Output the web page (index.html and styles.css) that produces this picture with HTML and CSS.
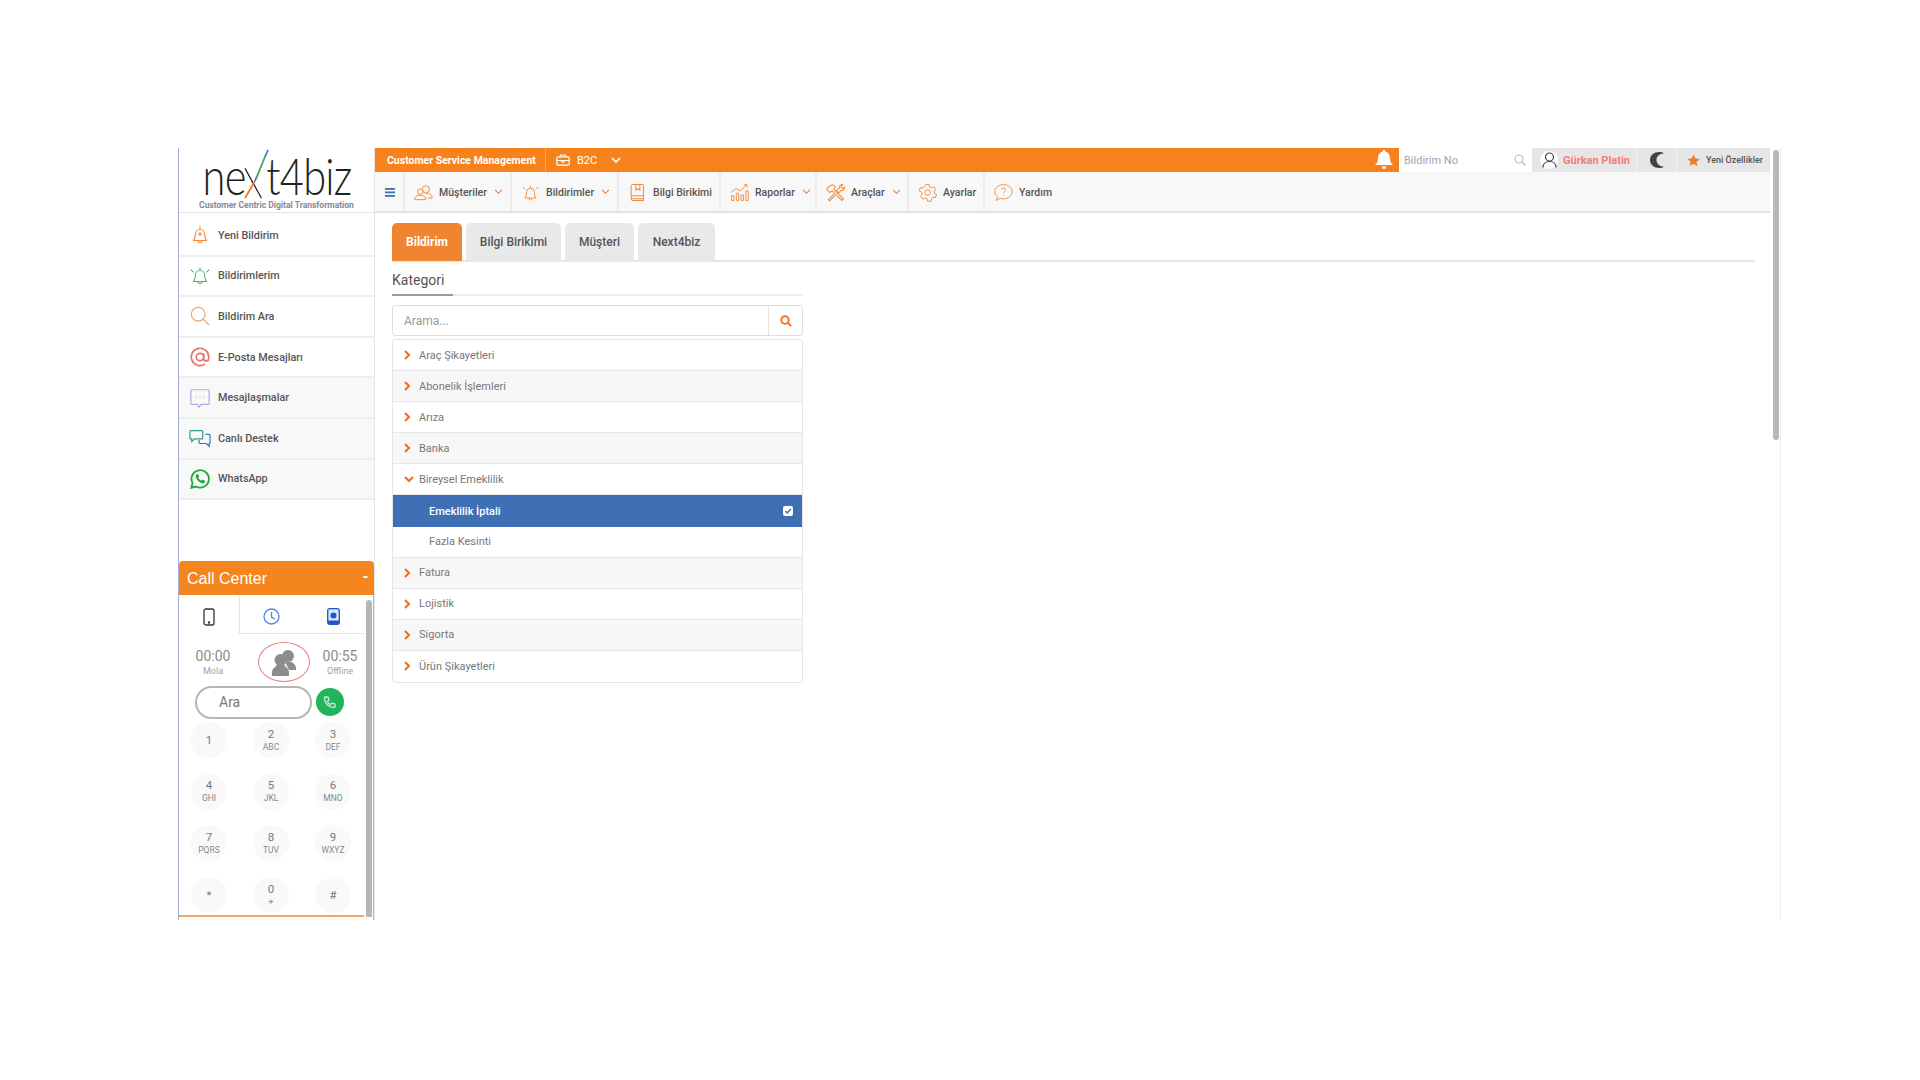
FILE: index.html
```html
<!DOCTYPE html>
<html lang="tr">
<head>
<meta charset="utf-8">
<title>next4biz</title>
<link rel="stylesheet" href="styles.css">
</head>
<body>
<div class="app">
  <aside class="side">
    <div class="logo">
      <div class="logo-mark"><span>ne</span><svg class="logo-x" viewBox="0 0 34 56" width="34" height="52"><path d="M2 22 L24 54" stroke="#1b1b1b" stroke-width="1.600" fill="none"/><path d="M2 54 L15 36" stroke="#f47b20" stroke-width="2.400" fill="none"/><path d="M15 36 L33 2" stroke="#2f6fd0" stroke-width="2" fill="none"/><path d="M17 34 L30 6" stroke="#5db04a" stroke-width="1.600" fill="none"/></svg><span>t4biz</span></div>
      <div class="logo-sub">Customer Centric Digital Transformation</div>
    </div>
    <nav class="side-nav">
      <a class="side-row"><svg class="side-ic" viewBox="0 0 24 24" fill="none" stroke="#f58a3c" stroke-width="1.300"><path d="M5 18c1.500-2 2-3.500 2-7a5 5 0 0 1 10 0c0 3.500.5 5 2 7zM12 2.500V6M9.500 18.500a2.600 2.600 0 0 0 5 0M12 9v4M10 11h4"/></svg><span>Yeni Bildirim</span></a>
      <a class="side-row"><svg class="side-ic" viewBox="0 0 24 24" fill="none" stroke="#58b368" stroke-width="1.200"><path d="M5 18c1.500-2 2-3.500 2-7a5 5 0 0 1 10 0c0 3.500.5 5 2 7zM9.500 18.500a2.600 2.600 0 0 0 5 0M12 3v3M2 5l3 3M22 5l-3 3"/></svg><span>Bildirimlerim</span></a>
      <a class="side-row"><svg class="side-ic" viewBox="0 0 24 24" fill="none" stroke="#f7a36a" stroke-width="1.300"><circle cx="10" cy="10" r="7.500"/><path d="M15.500 15.500L22 22"/></svg><span>Bildirim Ara</span></a>
      <a class="side-row"><svg class="side-ic" viewBox="0 0 24 24" fill="none" stroke="#e8736f" stroke-width="1.800"><circle cx="12" cy="12" r="4"/><path d="M16 8v5.500a2.700 2.700 0 0 0 5.500 0V12a9.500 9.500 0 1 0-4 7.700"/></svg><span>E-Posta Mesajları</span></a>
      <a class="side-row alt"><svg class="side-ic" viewBox="0 0 24 24" fill="none" stroke="#a9aee8" stroke-width="1.300"><path d="M3 3h18a1 1 0 0 1 1 1v14a1 1 0 0 1-1 1h-8l-2 3-2-3H3a1 1 0 0 1-1-1V4a1 1 0 0 1 1-1z"/><path d="M7.500 11h1M11.500 11h1M15.500 11h1"/></svg><span>Mesajlaşmalar</span></a>
      <a class="side-row alt"><svg class="side-ic" viewBox="0 0 24 24" fill="none" stroke-width="1.300"><path stroke="#2f9d8f" d="M2 4h12a1 1 0 0 1 1 1v7a1 1 0 0 1-1 1H6l-3 3v-3H2a1 1 0 0 1-1-1V5a1 1 0 0 1 1-1z"/><path stroke="#2b7bc4" d="M18 8h4a1 1 0 0 1 1 1v8a1 1 0 0 1-1 1v3l-3-3h-7a1 1 0 0 1-1-1v-3"/></svg><span>Canlı Destek</span></a>
      <a class="side-row alt"><svg class="side-ic" viewBox="0 0 24 24"><path fill="none" stroke="#1fa83c" stroke-width="2" d="M2.500 21.500l1.400-5a9.500 9.500 0 1 1 3.700 3.700z"/><path fill="#1fa83c" d="M8.500 6.800c.6-.5 1.300-.4 1.600.2l.8 1.800c.2.400 0 .8-.3 1.100l-.6.7c.8 1.500 2 2.600 3.500 3.400l.8-.9c.3-.3.7-.4 1-.2l1.800.9c.5.300.6.900.3 1.500-.6 1.200-2 1.700-3.300 1.300-3.300-1-5.800-3.500-6.700-6.700-.3-1.200.1-2.300 1.100-3.100z"/></svg><span>WhatsApp</span></a>
    </nav>
    <section class="cc">
      <header class="cc-head"><span>Call Center</span><b>-</b></header>
      <div class="cc-body">
        <div class="cc-main">
          <div class="cc-tabs">
            <div class="cc-tab active"><svg width="12" height="18" viewBox="0 0 12 18" fill="none" stroke="#333" stroke-width="1.300"><rect x="1" y="1" width="10" height="16" rx="2"/><circle cx="6" cy="14.500" r=".6" fill="#333"/></svg></div>
            <div class="cc-tab"><svg width="17" height="17" viewBox="0 0 17 17" fill="none" stroke="#4d86e8" stroke-width="1.300"><circle cx="8.500" cy="8.500" r="7.500"/><path d="M8.500 4v5l3.500 2"/></svg></div>
            <div class="cc-tab"><svg width="13" height="17" viewBox="0 0 13 17"><rect x=".7" y=".7" width="11.600" height="15.600" rx="2" fill="#d8e4fb" stroke="#1f56c8" stroke-width="1.300"/><circle cx="6.500" cy="7.500" r="3" fill="#1f56c8"/><path d="M1 12.500h11v2.500a1 1 0 0 1-1 1H2a1 1 0 0 1-1-1z" fill="#1f56c8"/></svg></div>
          </div>
          <div class="cc-status">
            <div class="timer"><strong>00:00</strong><small>Mola</small></div>
            <div class="agent"><svg width="24" height="27" viewBox="0 0 24 27" fill="#8c8c8c"><circle cx="16" cy="7" r="6"/><path d="M13 13h7l3 3c1 1 1 3 1 5h-7z"/><circle cx="8.500" cy="11" r="6"/><path d="M5 16h7l4 4c1 1 1 4 1 7H0c0-3 0-6 1-7z"/></svg></div>
            <div class="timer last"><strong>00:55</strong><small>Offline</small></div>
          </div>
          <div class="cc-dial">
            <div class="dial-input">Ara</div>
            <div class="dial-btn"><svg width="14" height="14" viewBox="0 0 24 24" fill="none" stroke="#cfe9d6" stroke-width="2.400"><path d="M5 3l4 1 1 5-2.500 2c1 2.500 3 4.500 5.500 5.500L15 14l5 1 1 4c0 1.500-1.500 2.500-3 2.500C10 21 3 14 2.500 6 2.500 4.500 3.500 3 5 3z"/></svg></div>
          </div>
          <div class="keypad">
            <div class="key solo"><b>1</b></div>
            <div class="key"><b>2</b><i>ABC</i></div>
            <div class="key"><b>3</b><i>DEF</i></div>
            <div class="key"><b>4</b><i>GHI</i></div>
            <div class="key"><b>5</b><i>JKL</i></div>
            <div class="key"><b>6</b><i>MNO</i></div>
            <div class="key"><b>7</b><i>PQRS</i></div>
            <div class="key"><b>8</b><i>TUV</i></div>
            <div class="key"><b>9</b><i>WXYZ</i></div>
            <div class="key solo"><b>*</b></div>
            <div class="key"><b>0</b><i>+</i></div>
            <div class="key solo"><b>#</b></div>
          </div>
        </div>
        <div class="cc-track"></div>
      </div>
    </section>
  </aside>
  <div class="main">
    <div class="topbar">
      <div class="tb-title">Customer Service Management</div>
      <div class="tb-b2c"><svg width="14" height="12" viewBox="0 0 14 12" fill="none" stroke="#fff" stroke-width="1.200"><rect x=".8" y="2.800" width="12.400" height="8.400" rx="1.500"/><path d="M4.500 2.800V1h5v1.800M.8 6.500h12.400M6 6.500v1.500h2V6.500"/></svg><span>B2C</span><svg class="chev-w" width="10" height="7" viewBox="0 0 10 7" fill="none" stroke="#fff" stroke-width="1.700"><path d="M1 1l4 4 4-4"/></svg></div>
      <div class="tb-bell"><svg width="18" height="20" viewBox="0 0 18 20" fill="#fff"><path d="M9 0c1 0 1.400.7 1.400 1.500C13.500 2.300 15 5 15 8c0 3.500 1 5.500 3 7H0c2-1.500 3-3.500 3-7 0-3 1.500-5.700 4.600-6.500C7.600.7 8 0 9 0z"/><path d="M6.500 16.500h5a2.500 2.500 0 0 1-5 0z"/></svg></div>
      <div class="tb-search"><span>Bildirim No</span><svg width="12" height="12" viewBox="0 0 12 12" fill="none" stroke="#b5b5b5" stroke-width="1.100"><circle cx="5" cy="5" r="4"/><path d="M8 8l3.500 3.500"/></svg></div>
      <div class="tb-user"><span class="avatar"><svg width="15" height="16" viewBox="0 0 15 16" fill="none" stroke="#444" stroke-width="1.200"><circle cx="7.500" cy="5" r="4"/><path d="M1 15.500c0-3.500 2.500-6 6.500-6s6.500 2.500 6.500 6"/></svg></span><span class="uname">Gürkan Platin</span></div>
      <div class="tb-moon"><svg width="14" height="16" viewBox="0 0 14 16" fill="#444"><path d="M9.500 0C4 0 0 3.500 0 8s4 8 9.500 8c1.800 0 3.200-.4 4.500-1.200C10 14.500 6.500 12 6.500 8S10 1.500 14 1.200C12.700.4 11.300 0 9.500 0z"/></svg></div>
      <div class="tb-new"><svg width="13" height="13" viewBox="0 0 24 24" fill="#f47b20"><path d="M12 1l3.400 7.300 7.900 1-5.800 5.500 1.500 7.900L12 18l-7 3.700 1.500-7.900L.7 9.300l7.900-1z"/></svg><span>Yeni Özellikler</span></div>
    </div>
    <nav class="menu">
      <div class="m-item m-burger"><svg width="10" height="9" viewBox="0 0 10 9" fill="#3f6fb5"><rect width="10" height="1.800"/><rect y="3.500" width="10" height="1.800"/><rect y="7" width="10" height="1.800"/></svg></div>
      <div class="m-item w1"><svg class="m-ic" viewBox="0 0 24 20" fill="none" stroke="#f58a3c" stroke-width="1.200"><circle cx="15" cy="6" r="4.500"/><circle cx="8" cy="9" r="3.500"/><path d="M1 19c0-3.500 2.500-5.500 7-5.500s7 2 7 5.500zM15 11c4.500 0 8 2 8 6h-6"/></svg><span>Müşteriler</span><svg class="chev" viewBox="0 0 10 7" fill="none" stroke="#f47b20" stroke-width="1.300"><path d="M1 1l4 4 4-4"/></svg></div>
      <div class="m-item w2"><svg class="m-ic" viewBox="0 0 24 24" fill="none" stroke="#f58a3c" stroke-width="1.200"><path d="M5 19c1.500-2 2-4 2-7.500a5 5 0 0 1 10 0c0 3.500.5 5.500 2 7.500zM9.500 19.500a2.600 2.600 0 0 0 5 0M12 3.500V6.500M2 5l3 3M22 5l-3 3"/></svg><span>Bildirimler</span><svg class="chev" viewBox="0 0 10 7" fill="none" stroke="#f47b20" stroke-width="1.300"><path d="M1 1l4 4 4-4"/></svg></div>
      <div class="m-item w3"><svg class="m-ic" viewBox="0 0 24 24" fill="none" stroke="#f58a3c" stroke-width="1.300"><path d="M6 2h12a1.500 1.500 0 0 1 1.500 1.500V20H6a2 2 0 0 1-2-2V4a2 2 0 0 1 2-2zM4 18a2 2 0 0 1 2-2h13.500M19.500 20v2H6a2 2 0 0 1-2-2M10 2v7l2.500-2L15 9V2"/></svg><span>Bilgi Birikimi</span></div>
      <div class="m-item w4"><svg class="m-ic" viewBox="0 0 24 24" fill="none" stroke="#f58a3c" stroke-width="1.200"><path d="M2 22v-6h3v6zM8 22v-9h3v9zM14 22v-7h3v7zM20 22V10h3v12zM1 12l7-5 5 3 8-8M18 2h3.500v3.500"/></svg><span>Raporlar</span><svg class="chev" viewBox="0 0 10 7" fill="none" stroke="#f47b20" stroke-width="1.300"><path d="M1 1l4 4 4-4"/></svg></div>
      <div class="m-item w5"><svg class="m-ic" viewBox="0 0 24 24" fill="none" stroke="#f58a3c" stroke-width="1.300"><path d="M3 5l5-3 4 3-2 3 12 12-2 2L8 10 5 12 1 8zM13 10l4-4c-.5-2 1-4 4-4l-2 3 2 2 2.500-2c0 3-2 5-4.500 4.500l-3 3zM10 14l-7 7 1.500 1.500 7-7"/></svg><span>Araçlar</span><svg class="chev" viewBox="0 0 10 7" fill="none" stroke="#f47b20" stroke-width="1.300"><path d="M1 1l4 4 4-4"/></svg></div>
      <div class="m-item w6"><svg class="m-ic" viewBox="0 0 24 24" fill="none" stroke="#f58a3c" stroke-width="1.200"><circle cx="12" cy="12" r="3.500"/><path d="M10 2h4l.7 3 2.700 1.200L20 4.500l2.500 3.500-2 2.300.3 2.700 2.700 1.500-1.500 4-3-.5-2 2-.2 3h-4.600l-.7-3-2.700-1.200-2.600 1.700L3.200 17l1.800-2.400-.3-2.800L1.500 10 3 6l3 .5 2-2z"/></svg><span>Ayarlar</span></div>
      <div class="m-item w7"><svg class="m-ic" viewBox="0 0 24 24" fill="none" stroke="#f58a3c" stroke-width="1.200"><path d="M12 2c6 0 11 4 11 9s-5 9-11 9c-1.500 0-3-.3-4-.7L3 22l1.500-4.500C2.500 16 1 13.700 1 11c0-5 5-9 11-9z"/><path d="M9.500 8.500c.3-1.500 1.300-2.200 2.600-2.200 1.500 0 2.500 1 2.500 2.200 0 2-2.600 2-2.600 4M12 14.500v1"/></svg><span>Yardım</span></div>
    </nav>
    <main class="content">
      <div class="tabs">
        <div class="tab on">Bildirim</div>
        <div class="tab t2">Bilgi Birikimi</div>
        <div class="tab t3">Müşteri</div>
        <div class="tab t4">Next4biz</div>
      </div>
      <div class="cat">
        <h2 class="cat-title"><span>Kategori</span></h2>
        <div class="search"><div class="search-in">Arama...</div><div class="search-btn"><svg width="12" height="12" viewBox="0 0 12 12" fill="none" stroke="#ef6c1a" stroke-width="1.800"><circle cx="5" cy="5" r="3.800"/><path d="M8 8l3.200 3.200"/></svg></div></div>
        <ul class="tree">
          <li class="node"><svg class="arr" viewBox="0 0 7 10" fill="none" stroke="#f26a1b" stroke-width="2"><path d="M1 1l4 4-4 4"/></svg>Araç Şikayetleri</li>
          <li class="node grey"><svg class="arr" viewBox="0 0 7 10" fill="none" stroke="#f26a1b" stroke-width="2"><path d="M1 1l4 4-4 4"/></svg>Abonelik İşlemleri</li>
          <li class="node"><svg class="arr" viewBox="0 0 7 10" fill="none" stroke="#f26a1b" stroke-width="2"><path d="M1 1l4 4-4 4"/></svg>Arıza</li>
          <li class="node grey"><svg class="arr" viewBox="0 0 7 10" fill="none" stroke="#f26a1b" stroke-width="2"><path d="M1 1l4 4-4 4"/></svg>Banka</li>
          <li class="node"><svg class="arr-d" viewBox="0 0 10 7" fill="none" stroke="#f26a1b" stroke-width="2"><path d="M1 1l4 4 4-4"/></svg>Bireysel Emeklilik</li>
          <li class="node child sel"><span>Emeklilik İptali</span><svg class="check" width="10" height="10" viewBox="0 0 10 10"><rect width="10" height="10" rx="2" fill="#fff"/><path d="M2.300 5l2 2 3.500-4" fill="none" stroke="#3f6fb5" stroke-width="1.500"/></svg></li>
          <li class="node child">Fazla Kesinti</li>
          <li class="node grey"><svg class="arr" viewBox="0 0 7 10" fill="none" stroke="#f26a1b" stroke-width="2"><path d="M1 1l4 4-4 4"/></svg>Fatura</li>
          <li class="node"><svg class="arr" viewBox="0 0 7 10" fill="none" stroke="#f26a1b" stroke-width="2"><path d="M1 1l4 4-4 4"/></svg>Lojistik</li>
          <li class="node grey"><svg class="arr" viewBox="0 0 7 10" fill="none" stroke="#f26a1b" stroke-width="2"><path d="M1 1l4 4-4 4"/></svg>Sigorta</li>
          <li class="node"><svg class="arr" viewBox="0 0 7 10" fill="none" stroke="#f26a1b" stroke-width="2"><path d="M1 1l4 4-4 4"/></svg>Ürün Şikayetleri</li>
        </ul>
      </div>
    </main>
  </div>
  <div class="page-track"><div class="page-thumb"></div></div>
</div>
</body>
</html>
```
FILE: styles.css
```css
* { box-sizing: border-box; }
html, body { margin: 0; height: 100%; background: #fff; overflow: hidden; }
body { font-family: Roboto, "Noto Sans", sans-serif; color: #555; padding: 148px 0 0 178px; }
ul { list-style: none; margin: 0; padding: 0; }
.app { display: flex; width: 1602px; height: 772px; }

/* sidebar */
.side { width: 197px; flex: none; display: flex; flex-direction: column; border-left: 1px solid #a5acd8; border-right: 1px solid #e6e6ea; }
.logo { height: 65px; display: flex; flex-direction: column; align-items: center; border-bottom: 1px solid #e3e3e3; padding-top: 2px; flex: none; }
.logo-mark { display: flex; align-items: flex-end; height: 50px; font-family: Lato, sans-serif; font-size: 52px; line-height: 50px; font-weight: 300; color: #222; letter-spacing: -1px; transform: scaleX(.8); white-space: nowrap; }
.logo-x { margin: 0 -4px 0 -4px; flex: none; }
.logo-sub { font-size: 8.500px; font-weight: 700; color: #858a92; line-height: 11px; white-space: nowrap; }
.side-nav { display: flex; flex-direction: column; padding-top: 3px; flex: none; }
.side-row { height: 40.600px; display: flex; align-items: center; gap: 7px; padding-left: 10px; border-bottom: 2px solid #eeeeef; font-size: 10.800px; font-weight: 500; color: #555; flex: none; }
.side-row.alt { background: #f8f8f8; }
.side-ic { width: 22px; height: 22px; flex: none; }

/* call center */
.cc { height: 359px; margin-top: auto; flex: none; display: flex; flex-direction: column; }
.cc-head { height: 34px; background: #f5851f; color: #fff; border-radius: 4px 4px 0 0; display: flex; align-items: center; justify-content: space-between; padding: 1px 6px 0 8px; font: 400 16px "Liberation Sans", sans-serif; }
.cc-head b { font-weight: 700; margin-top: -5px; }
.cc-body { flex: 1; display: flex; border-right: 1px solid #f6a465; min-height: 0; }
.cc-main { width: 185px; flex: none; border-bottom: 2px solid #f6a465; height: 322px; }
.cc-track { width: 6px; height: 317px; margin: 5px 0 0 2px; background: #b5b5b5; border-radius: 3px 3px 0 0; }
.cc-tabs { display: flex; height: 39px; }
.cc-tab { flex: 1; display: flex; align-items: center; justify-content: center; border-bottom: 1px solid #e3e3ea; padding-top: 5px; }
.cc-tab.active { flex: 0 0 61px; border-bottom: 0; border-right: 1px solid #e3e3ea; border-radius: 4px 4px 0 0; }
.cc-status { display: flex; align-items: center; height: 50px; padding-left: 14px; margin-top: 3px; }
.timer { display: flex; flex-direction: column; align-items: center; width: 40px; flex: none; }
.timer strong { font-size: 14px; line-height: 18px; font-weight: 400; color: #8b8b8b; }
.timer small { font-size: 9px; line-height: 13px; color: #a2a2a2; }
.agent { width: 52px; height: 40px; border: 1px solid #e98080; border-radius: 50%; display: flex; align-items: center; justify-content: center; margin-left: 25px; flex: none; }
.timer.last { margin-left: 10px; }
.cc-dial { display: flex; align-items: center; gap: 4px; padding-left: 16px; height: 34px; margin-top: -2px; }
.dial-input { width: 117px; height: 33px; border: 2px solid #b5b5b5; border-radius: 17px; padding-left: 22px; font-size: 14px; line-height: 29px; color: #777; }
.dial-btn { width: 28px; height: 28px; border-radius: 50%; background: #22b45a; display: flex; align-items: center; justify-content: center; flex: none; }
.keypad { display: grid; grid-template-columns: repeat(3, 36px); column-gap: 26px; row-gap: 15.700px; padding: 3px 0 0 12px; }
.key { width: 36px; height: 36px; border-radius: 50%; background: #f9f9fa; display: flex; flex-direction: column; align-items: center; justify-content: center; color: #777; }
.key b { font-size: 11.500px; line-height: 14px; font-weight: 400; }
.key i { font-size: 8.500px; line-height: 13px; font-style: normal; color: #888; }

/* main column */
.main { width: 1395px; flex: none; display: flex; flex-direction: column; }
.topbar { display: flex; height: 24px; background: #f7821b; color: #fff; align-items: stretch; flex: none; }
.tb-title { width: 171px; padding-left: 12px; font-size: 10.500px; font-weight: 700; line-height: 25px; border-right: 1px solid #fba765; white-space: nowrap; }
.tb-b2c { flex: 1; display: flex; align-items: center; gap: 7px; padding-left: 10px; font-size: 11px; }
.chev-w { margin-left: 7px; }
.tb-bell { width: 30px; display: flex; align-items: center; justify-content: center; }
.tb-search { width: 133px; background: #fff; color: #a5a5a5; font-size: 11px; display: flex; align-items: center; justify-content: space-between; padding: 0 6px 0 5px; }
.tb-user { width: 105px; background: #e6e6e6; display: flex; align-items: center; gap: 5px; padding-left: 8px; border-right: 1px solid #f3f3f3; }
.avatar { width: 18px; height: 18px; border-radius: 50%; background: #fff; display: flex; align-items: center; justify-content: center; flex: none; }
.uname { color: #ee7f74; font-size: 11px; font-weight: 700; white-space: nowrap; }
.tb-moon { width: 40px; background: #e6e6e6; display: flex; align-items: center; justify-content: center; border-right: 1px solid #f3f3f3; }
.tb-new { width: 93px; background: #e6e6e6; color: #555; display: flex; align-items: center; gap: 6px; padding-left: 10px; font-size: 9px; font-weight: 500; white-space: nowrap; }

.menu { display: flex; height: 41px; background: #f8f8f8; border-bottom: 2px solid #e2e3ea; flex: none; font-size: 10.500px; font-weight: 500; color: #555; }
.m-item { display: flex; align-items: center; gap: 6px; padding: 1px 0 0 9px; border-right: 2px solid #ececee; white-space: nowrap; }
.m-burger { width: 30px; padding-left: 10px; }
.m-ic { width: 19px; height: 19px; flex: none; }
.chev { width: 9px; height: 6px; margin-left: 1px; }
.w1 { width: 107px; } .w2 { width: 107px; } .w3 { width: 102px; } .w4 { width: 96px; } .w5 { width: 92px; } .w6 { width: 76px; }
.w7 { width: 76px; border-right: 0; }

.content { flex: 1; padding: 10px 0 0 17px; background: #fff; }
.tabs { display: flex; gap: 4px; height: 39px; border-bottom: 2px solid #e6e6e6; width: 1363px; }
.tab { height: 38px; width: 70px; border-radius: 5px 5px 0 0; background: #e9e9e9; color: #555; font-size: 12px; font-weight: 500; display: flex; align-items: center; justify-content: center; }
.tab.on { background: #ef8530; color: #fff; font-weight: 700; }
.tab.t2 { width: 95px; } .tab.t3 { width: 69px; } .tab.t4 { width: 77px; }
.cat { width: 411px; }
.cat-title { margin: 6px 0 0; height: 28px; border-bottom: 2px solid #ececec; font-size: 14px; font-weight: 400; color: #555; line-height: 24px; }
.cat-title span { display: inline-block; height: 28px; width: 61px; border-bottom: 2px solid #9b9b9b; }
.search { display: flex; height: 31px; margin-top: 9px; border: 1px solid #dedede; border-radius: 3px; }
.search-in { flex: 1; padding-left: 11px; font-size: 12px; line-height: 30px; color: #9a9a9a; }
.search-btn { width: 34px; border-left: 1px solid #e3e3e3; display: flex; align-items: center; justify-content: center; }
.tree { margin-top: 3px; border: 1px solid #e6e6e6; border-radius: 3px; }
.node { height: 31.100px; display: flex; align-items: center; padding-left: 11px; font-size: 11px; color: #777; border-bottom: 1px solid #e6e6e6; }
.node:last-child { border-bottom: 0; }
.node.grey { background: #f7f7f7; }
.arr { width: 7px; height: 10px; margin-right: 8px; flex: none; }
.arr-d { width: 10px; height: 7px; margin-right: 5px; flex: none; }
.child { padding-left: 36px; }
.sel { background: #3f6fb5; color: #fff; font-weight: 500; justify-content: space-between; padding-right: 9px; border-bottom: 0; }
.page-track { flex: 1; padding: 2px 1px 0 3px; border-right: 1px solid #eee; }
.page-thumb { width: 6px; height: 290px; background: #b8b8b8; border-radius: 3px; }
```
